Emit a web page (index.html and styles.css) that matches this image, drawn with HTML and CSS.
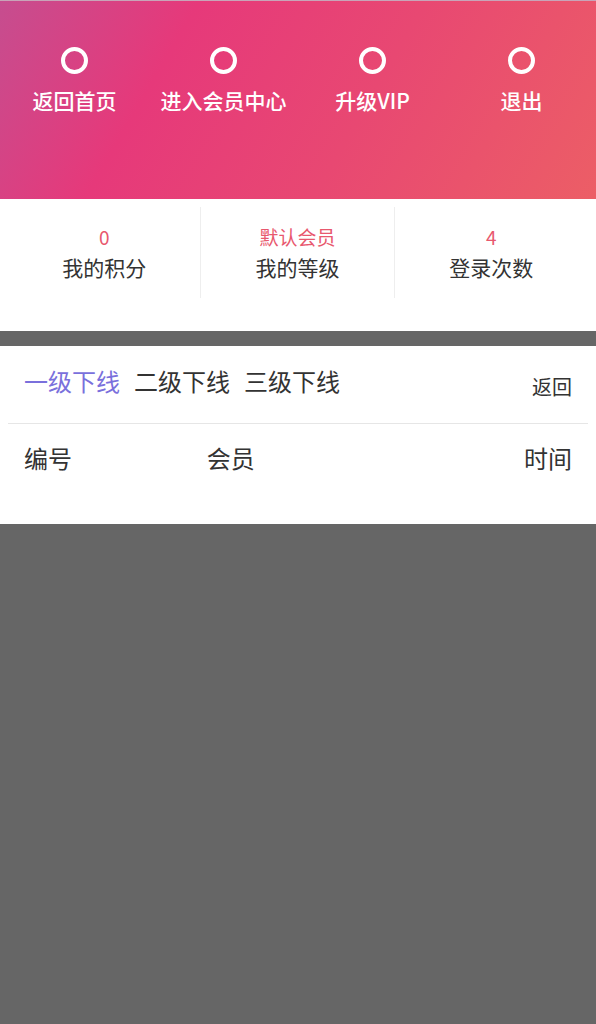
FILE: index.html
```html
<!DOCTYPE html>
<html lang="zh-CN">
<head>
<meta charset="utf-8">
<title>会员中心</title>
<link rel="stylesheet" href="styles.css">
</head>
<body>
<header class="hero">
  <a class="nav-item"><span class="ring"></span><span class="nav-label">返回首页</span></a>
  <a class="nav-item"><span class="ring"></span><span class="nav-label">进入会员中心</span></a>
  <a class="nav-item"><span class="ring"></span><span class="nav-label">升级VIP</span></a>
  <a class="nav-item"><span class="ring"></span><span class="nav-label">退出</span></a>
</header>

<section class="stats">
  <div class="stat"><span class="stat-value">0</span><span class="stat-label">我的积分</span></div>
  <div class="stat"><span class="stat-value">默认会员</span><span class="stat-label">我的等级</span></div>
  <div class="stat"><span class="stat-value">4</span><span class="stat-label">登录次数</span></div>
</section>

<section class="team">
  <div class="tab-row">
    <div class="tabs">
      <span class="tab active">一级下线</span>
      <span class="tab">二级下线</span>
      <span class="tab">三级下线</span>
    </div>
    <span class="back">返回</span>
  </div>
  <div class="table-head">
    <span>编号</span>
    <span>会员</span>
    <span class="right">时间</span>
  </div>
</section>
</body>
</html>
```

FILE: styles.css
```css
* { box-sizing: border-box; }

html, body {
  margin: 0;
  padding: 0;
}

body {
  background: #666666;
  font-family: "Noto Sans CJK SC", "Noto Sans", sans-serif;
  color: #333333;
  min-height: 1024px;
}

.hero {
  height: 199px;
  border-top: 1px solid #c8a4b8;
  background: linear-gradient(120deg, #c64d8f 0%, #e6397a 28%, #e84872 60%, #ec5e66 100%);
  display: grid;
  grid-template-columns: repeat(4, 1fr);
  align-items: start;
  padding-top: 46px;
}

.nav-item {
  display: flex;
  flex-direction: column;
  align-items: center;
  color: #ffffff;
  text-decoration: none;
}

.ring {
  width: 27px;
  height: 27px;
  border: 4px solid #ffffff;
  border-radius: 50%;
}

.nav-label {
  margin-top: 12px;
  font-size: 21px;
  line-height: 28px;
  font-weight: 500;
  white-space: nowrap;
}

.stats {
  background: #ffffff;
  height: 132px;
  padding: 8px 8px 0;
  display: grid;
  grid-template-columns: repeat(3, 1fr);
  align-items: start;
}

.stat {
  height: 91px;
  display: flex;
  flex-direction: column;
  align-items: center;
  padding-top: 16px;
  border-right: 1px solid #eeeeee;
}

.stat:last-child { border-right: none; }

.stat-value {
  font-size: 19px;
  line-height: 28px;
  color: #e8586e;
}

.stat-label {
  font-size: 21px;
  line-height: 32px;
  color: #333333;
}

.team {
  margin-top: 15px;
  background: #ffffff;
  height: 178px;
  padding: 0 8px;
}

.tab-row {
  height: 78px;
  border-bottom: 1px solid #e6e6e6;
  padding: 18px 16px 0;
  display: flex;
  justify-content: space-between;
  align-items: flex-start;
}

.tabs {
  display: flex;
  gap: 14px;
}

.tab {
  font-size: 24px;
  line-height: 34px;
  color: #333333;
}

.tab.active { color: #7a70dc; }

.back {
  margin-top: 8px;
  font-size: 20px;
  line-height: 30px;
  color: #333333;
}

.table-head {
  display: grid;
  grid-template-columns: repeat(3, 1fr);
  padding: 17px 16px 0;
  font-size: 24px;
  line-height: 34px;
  color: #333333;
}

.table-head .right { text-align: right; }
```
